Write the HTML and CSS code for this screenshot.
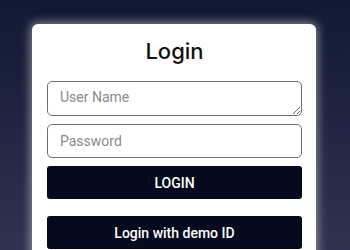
FILE: index.html
```html
<!DOCTYPE html>
<html lang="en">
<head>
<meta charset="utf-8">
<title>Login</title>
<link rel="stylesheet" href="styles.css">
</head>
<body>
<main class="page">
  <form class="card">
    <h1 class="title">Login</h1>
    <textarea class="field field-area" placeholder="User Name"></textarea>
    <input class="field" type="password" placeholder="Password">
    <button class="btn" type="button">LOGIN</button>
    <button class="btn btn-demo" type="button">Login with demo ID</button>
  </form>
</main>
</body>
</html>
```
FILE: styles.css
```css
html, body {
  margin: 0;
  height: 100%;
}
body {
  background: linear-gradient(180deg, #121933 0%, #1f2542 50%, #2f3351 100%);
  font-family: "Inter", "DejaVu Sans", sans-serif;
  overflow: hidden;
}
.page {
  display: flex;
  justify-content: center;
  padding-top: 24px;
}
.card {
  box-sizing: border-box;
  width: 284px;
  margin-left: -2px;
  background: #ffffff;
  border-radius: 6px;
  box-shadow: 0 0 10px 2px rgba(255, 255, 255, 0.45);
  padding: 12px 14px 20px 15px;
  display: flex;
  flex-direction: column;
}
.title {
  margin: 0 0 15px;
  text-align: center;
  font-size: 22px;
  line-height: 30px;
  font-weight: 500;
  color: #111111;
}
.field {
  box-sizing: border-box;
  width: 100%;
  height: 34px;
  margin: 0 0 8px;
  padding: 0 12px;
  border: 1px solid #707070;
  border-radius: 5px;
  font-family: "Roboto", "DejaVu Sans", sans-serif;
  font-size: 14px;
  color: #333;
  background: #fff;
  outline: none;
}
.field::placeholder {
  color: #8a8a8a;
}
.field-area {
  height: 35px;
  padding-top: 7px;
  resize: vertical;
  display: block;
}
.btn {
  box-sizing: border-box;
  width: 100%;
  height: 33px;
  border: none;
  border-radius: 3px;
  background: #050a1c;
  color: #ffffff;
  font-family: "Roboto", "DejaVu Sans", sans-serif;
  font-size: 14px;
  font-weight: 500;
  cursor: pointer;
}
.btn-demo {
  margin-top: 17px;
}
```
